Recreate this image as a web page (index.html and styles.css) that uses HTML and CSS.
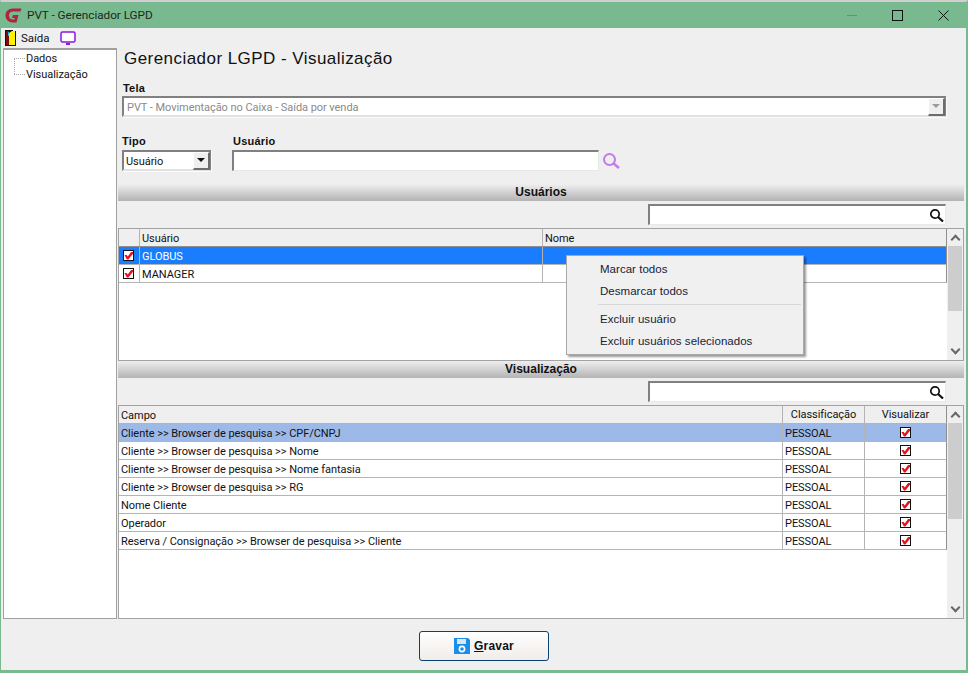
FILE: index.html
```html
<!DOCTYPE html>
<html lang="pt-BR">
<head>
<meta charset="utf-8">
<title>PVT - Gerenciador LGPD</title>
<link rel="stylesheet" href="styles.css">
</head>
<body>
<div class="window">
  <header class="titlebar">
    <svg class="logo" width="17" height="15" viewBox="0 0 17 15"><path d="M16.500 0.500H8C3.500 0.500 0.500 3.500 0.500 7.500S3.500 14.500 8 14.500h3.500L13.500 7H8L7 10h2.800l-.5 1.500H8C5.500 11.500 4 10 4 7.500S5.500 3.500 8 3.500h7.500z" fill="#b0243f"/></svg>
    <span class="title">PVT - Gerenciador LGPD</span>
    <div class="controls">
      <span class="ctl ctl-min"></span>
      <span class="ctl ctl-max"></span>
      <svg class="ctl-x" width="11" height="11" viewBox="0 0 11 11"><path d="M.5.500l10 10M10.500.500l-10 10" stroke="#111" fill="none"/></svg>
    </div>
  </header>
  <nav class="toolbar">
    <svg width="11" height="16" viewBox="0 0 11 16"><rect width="11" height="16" fill="#111"/><rect x="1" y="1" width="3" height="14" fill="#7a0f0f"/><path d="M4 3l3-2h3v14H4z" fill="#fff200"/><rect x="3" y="2" width="1" height="4" fill="#19b5e8"/><rect x="8" y="0" width="3" height="1" fill="#efefef"/></svg>
    <span class="tool-label">Saída</span>
    <svg class="monitor" width="16" height="15" viewBox="0 0 16 15"><rect x="1" y="1" width="14" height="10" rx="1.500" fill="#fff" stroke="#8a18e0" stroke-width="1.500"/><rect x="6" y="12" width="4" height="2" fill="#8a18e0"/></svg>
  </nav>
  <div class="content">
    <aside class="tree">
      <div class="tree-item">Dados</div>
      <div class="tree-item">Visualização</div>
    </aside>
    <main class="main">
      <section class="form">
        <h1>Gerenciador LGPD - Visualização</h1>
        <label class="lbl lbl-tela">Tela</label>
        <div class="combo combo-wide">
          <span class="combo-text muted">PVT - Movimentação no Caixa - Saída por venda</span>
          <span class="combo-btn"><i class="arrow arrow-off"></i></span>
        </div>
        <div class="filters">
          <div class="field">
            <label class="lbl">Tipo</label>
            <div class="combo combo-type">
              <span class="combo-text">Usuário</span>
              <span class="combo-btn"><i class="arrow"></i></span>
            </div>
          </div>
          <div class="field">
            <label class="lbl lbl-user">Usuário</label>
            <div class="user-row">
              <div class="input input-user"></div>
              <svg width="19" height="18" viewBox="0 0 19 18"><circle cx="7.500" cy="7.500" r="5.500" fill="none" stroke="#c27be8" stroke-width="2"/><path d="M11.500 11.500l5.500 4.500" stroke="#c27be8" stroke-width="2.400"/></svg>
            </div>
          </div>
        </div>
      </section>

      <div class="band">Usuários</div>
      <div class="search-row">
        <div class="input input-search">
          <svg width="15" height="15" viewBox="0 0 15 15"><circle cx="6" cy="6" r="4.200" fill="none" stroke="#111" stroke-width="1.700"/><path d="M9 9l5 4.500" stroke="#111" stroke-width="2.300"/></svg>
        </div>
      </div>
      <div class="grid grid-users">
        <div class="grid-body">
          <div class="row row-users head"><span></span><span>Usuário</span><span>Nome</span></div>
          <div class="row row-users sel-strong"><span class="c-center"><i class="check"></i></span><span>GLOBUS</span><span></span></div>
          <div class="row row-users"><span class="c-center"><i class="check"></i></span><span>MANAGER</span><span></span></div>
        </div>
        <div class="scrollbar">
          <span class="sb-arrow up"></span>
          <span class="thumb thumb-users"></span>
          <span class="sb-arrow down"></span>
        </div>
      </div>

      <div class="band">Visualização</div>
      <div class="search-row">
        <div class="input input-search">
          <svg width="15" height="15" viewBox="0 0 15 15"><circle cx="6" cy="6" r="4.200" fill="none" stroke="#111" stroke-width="1.700"/><path d="M9 9l5 4.500" stroke="#111" stroke-width="2.300"/></svg>
        </div>
      </div>
      <div class="grid grid-view">
        <div class="grid-body">
          <div class="row row-view head"><span>Campo</span><span class="c-center">Classificação</span><span class="c-center">Visualizar</span></div>
          <div class="row row-view sel-soft"><span>Cliente &gt;&gt; Browser de pesquisa &gt;&gt; CPF/CNPJ</span><span>PESSOAL</span><span class="c-center"><i class="check"></i></span></div>
          <div class="row row-view"><span>Cliente &gt;&gt; Browser de pesquisa &gt;&gt; Nome</span><span>PESSOAL</span><span class="c-center"><i class="check"></i></span></div>
          <div class="row row-view"><span>Cliente &gt;&gt; Browser de pesquisa &gt;&gt; Nome fantasia</span><span>PESSOAL</span><span class="c-center"><i class="check"></i></span></div>
          <div class="row row-view"><span>Cliente &gt;&gt; Browser de pesquisa &gt;&gt; RG</span><span>PESSOAL</span><span class="c-center"><i class="check"></i></span></div>
          <div class="row row-view"><span>Nome Cliente</span><span>PESSOAL</span><span class="c-center"><i class="check"></i></span></div>
          <div class="row row-view"><span>Operador</span><span>PESSOAL</span><span class="c-center"><i class="check"></i></span></div>
          <div class="row row-view"><span>Reserva / Consignação &gt;&gt; Browser de pesquisa &gt;&gt; Cliente</span><span>PESSOAL</span><span class="c-center"><i class="check"></i></span></div>
        </div>
        <div class="scrollbar">
          <span class="sb-arrow up"></span>
          <span class="thumb thumb-view"></span>
          <span class="sb-arrow down"></span>
        </div>
      </div>
    </main>
  </div>
  <footer class="footer">
    <button class="save" type="button">
      <svg width="16" height="16" viewBox="0 0 16 16"><path d="M0 0h14l2 2v14H0z" fill="#1b8fe8"/><rect x="3" y="1" width="9" height="5" fill="#d5e6f5"/><circle cx="8" cy="11" r="2.600" fill="none" stroke="#fff" stroke-width="1.600"/></svg>
      <span><u>G</u>ravar</span>
    </button>
  </footer>

  <div class="menu">
    <div class="menu-item">Marcar todos</div>
    <div class="menu-item">Desmarcar todos</div>
    <div class="menu-sep"></div>
    <div class="menu-item">Excluir usuário</div>
    <div class="menu-item">Excluir usuários selecionados</div>
  </div>
</div>
</body>
</html>
```
FILE: styles.css
```css
* { box-sizing: border-box; }
html, body { margin: 0; padding: 0; }
body {
  width: 968px;
  height: 673px;
  overflow: hidden;
  background: #fff;
  font-family: Roboto, "Liberation Sans", Arial, sans-serif;
  font-size: 11px;
  letter-spacing: -.05px;
  color: #111;
}
.window {
  position: relative;
  width: 968px;
  height: 673px;
  display: flex;
  flex-direction: column;
  background: #efefef;
  border-top: 2px solid #cfcfcf;
  border-left: 1px solid #78b98f;
  border-right: 2px solid #78b98f;
  border-bottom: 3px solid #78b98f;
}
.titlebar {
  height: 26px;
  flex: none;
  display: flex;
  align-items: center;
  background: #78b98f;
  padding-left: 5px;
  margin-left: -1px;
  margin-right: -2px;
}
.logo { margin-right: 5px; }
.title { font-size: 11.800px; color: #1c2a20; }
.controls { margin-left: auto; display: flex; align-items: center; }
.ctl { display: block; }
.ctl-min { width: 10px; height: 1px; background: #5d9673; margin-right: 35px; }
.ctl-max { width: 11px; height: 11px; border: 1px solid #111; margin-right: 35px; }
.ctl-x { margin-right: 19px; }
.toolbar {
  height: 20px;
  flex: none;
  display: flex;
  align-items: center;
  padding-left: 4px;
}
.tool-label { margin-left: 5px; font-size: 11.500px; }
.monitor { margin-left: 11px; }
.content {
  flex: 1;
  min-height: 0;
  display: flex;
  padding-left: 2px;
  padding-right: 2px;
}
.tree {
  width: 114px;
  margin-right: 1px;
  flex: none;
  background: #fff;
  border: 1px solid #a0a0a0;
  border-top-width: 2px;
  padding-top: 1px;
}
.tree-item {
  height: 16px;
  line-height: 15px;
  padding-left: 22px;
  position: relative;
}
.tree-item::before {
  content: "";
  position: absolute;
  left: 10px;
  top: 7px;
  width: 11px;
  border-top: 1px dotted #aaa;
}
.tree-item + .tree-item::after {
  content: "";
  position: absolute;
  left: 10px;
  top: -8px;
  height: 15px;
  border-left: 1px dotted #aaa;
}
.main {
  flex: 1;
  min-width: 0;
  display: flex;
  flex-direction: column;
}
.form { height: 136px; flex: none; padding-left: 4px; }
h1 {
  margin: 0;
  padding: 1px 0 0 2px;
  height: 33px;
  line-height: 20px;
  font-family: "Liberation Sans", Arial, sans-serif;
  font-size: 17px;
  font-weight: 400;
  letter-spacing: .45px;
  color: #111;
}
.lbl {
  display: block;
  font-family: "Liberation Sans", Arial, sans-serif;
  font-weight: 700;
  font-size: 11px;
  height: 14px;
  line-height: 14px;
  letter-spacing: .2px;
}
.lbl-tela { padding-left: 1px; }
.lbl-user { padding-left: 1px; }
.combo {
  height: 21px;
  display: flex;
  align-items: center;
  justify-content: space-between;
  background: #fff;
  border: 2px solid #808080;
  border-bottom-color: #e2e2e2;
  border-right-width: 1px;
  padding-left: 3px;
  box-shadow: 1px 1px 0 #fbfbfb;
}
.combo-wide { width: 824px; margin-top: 1px; }
.combo-type { width: 89px; padding-left: 2px; }
.combo-text { padding-top: 2px; }
.muted { color: #8a8a8a; }
.combo-btn {
  width: 17px;
  height: 18px;
  flex: none;
  display: flex;
  align-items: center;
  justify-content: center;
  background: #efefef;
  border: 1px solid #fff;
  border-right: 2px solid #6d6d6d;
  border-bottom: 2px solid #6d6d6d;
}
.arrow {
  width: 0;
  height: 0;
  border-left: 4px solid transparent;
  border-right: 4px solid transparent;
  border-top: 4px solid #111;
}
.arrow-off { border-top-color: #9a9a9a; }
.filters { display: flex; gap: 21px; margin-top: 17px; }
.filters .lbl { height: 16px; line-height: 14px; }
.user-row { display: flex; align-items: center; gap: 3px; }
.input {
  height: 21px;
  background: #fff;
  border: 2px solid #808080;
  border-right: 1px solid #e8e8e8;
  border-bottom: 1px solid #e8e8e8;
}
.input-user { width: 367px; }
.band {
  height: 17px;
  flex: none;
  text-align: center;
  font-family: "Liberation Sans", Arial, sans-serif;
  font-weight: 700;
  font-size: 12px;
  letter-spacing: 0;
  line-height: 17px;
  background: linear-gradient(#efefef, #b3b3b3);
}
.search-row { height: 27px; flex: none; padding: 3px 0 0 530px; }
.input-search {
  width: 298px;
  display: flex;
  align-items: center;
  justify-content: flex-end;
  padding-right: 1px;
}
.grid {
  display: flex;
  background: #fff;
  border: 1px solid #a3a3a3;
}
.grid-users { height: 133px; flex: none; }
.grid-view { height: 214px; flex: none; }
.grid-body { flex: 1; min-width: 0; }
.row {
  display: grid;
  height: 18px;
  line-height: 18px;
  border-bottom: 1px solid #b4b4b4;
  border-right: 1px solid #8f8f8f;
}
.row > span {
  padding-left: 2px;
  padding-top: 1px;
  border-right: 1px solid #b4b4b4;
  white-space: nowrap;
  overflow: hidden;
}
.row > span:last-child { border-right: 0; }
.row-users { grid-template-columns: 21px 403px 1fr; }
.row-view { grid-template-columns: 664px 82px 1fr; }
.row-users.head { border-bottom-color: #8f8f8f; }
.row-users > .c-center { padding-right: 1px; }
.head { background: #efefef; }
.sel-strong { background: #1a7dff; color: #fff; }
.sel-soft { background: #9db9e8; }
.row > .c-center {
  display: flex;
  align-items: center;
  justify-content: center;
  padding-left: 0;
  padding-top: 0;
}
.check {
  display: block;
  width: 11px;
  height: 11px;
  background: #fff;
  border: 1px solid #111;
  position: relative;
}
.check::after {
  content: "";
  position: absolute;
  inset: 0;
  background: #e8101a;
  clip-path: polygon(5% 45%, 30% 45%, 42% 62%, 78% 10%, 100% 10%, 100% 30%, 48% 95%, 32% 95%);
}
.scrollbar {
  width: 16px;
  flex: none;
  background: #efefef;
  display: flex;
  flex-direction: column;
  align-items: stretch;
}
.sb-arrow { height: 17px; flex: none; position: relative; }
.sb-arrow::after {
  content: "";
  position: absolute;
  left: 5px;
  width: 5px;
  height: 5px;
  border-left: 2px solid #666;
  border-top: 2px solid #666;
}
.up::after { top: 7px; transform: rotate(45deg); }
.down { margin-top: auto; }
.down::after { top: 3px; transform: rotate(225deg); }
.thumb { display: block; background: #cdcdcd; margin: 0 1px; }
.thumb-users { height: 65px; }
.thumb-view { height: 96px; }
.footer {
  height: 51px;
  flex: none;
  display: flex;
  justify-content: center;
  padding: 12px 0 0 1px;
}
.save {
  width: 130px;
  height: 30px;
  display: flex;
  align-items: center;
  justify-content: center;
  gap: 4px;
  padding: 0;
  background: linear-gradient(#ffffff, #f0ece8);
  border: 1px solid #0d3f73;
  border-radius: 3px;
  font-family: "Liberation Sans", Arial, sans-serif;
  font-size: 12px;
  font-weight: 700;
  color: #111;
  letter-spacing: .2px;
}
.menu {
  position: absolute;
  left: 565px;
  top: 253px;
  width: 238px;
  height: 100px;
  padding-top: 2px;
  background: #f0f0f0;
  border: 1px solid #a8a8a8;
  box-shadow: 2px 2px 2px rgba(0, 0, 0, .4);
  font-family: "Liberation Sans", Arial, sans-serif;
  font-size: 11.500px;
  letter-spacing: .03px;
  color: #14233a;
}
.menu-item { height: 22px; line-height: 22px; padding-left: 33px; }
.menu-sep { height: 1px; background: #d7d7d7; margin: 2px 2px 3px 31px; }
```
